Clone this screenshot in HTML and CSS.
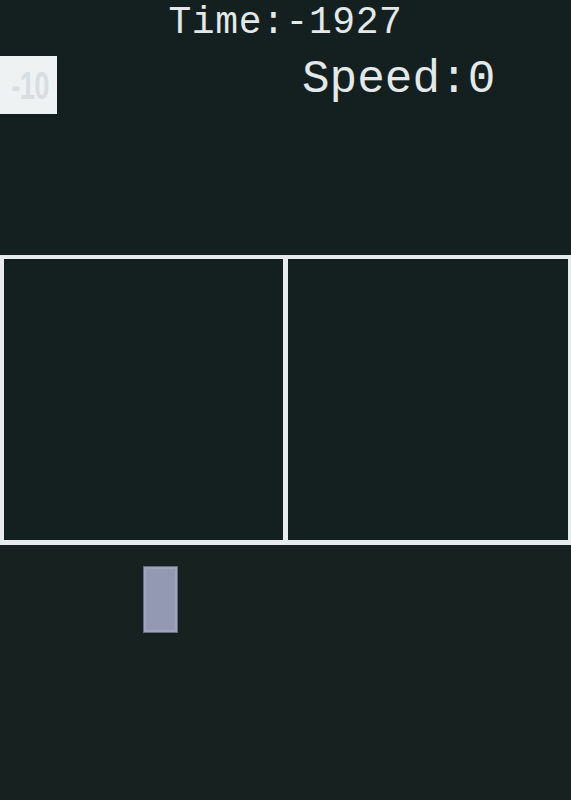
FILE: index.html
```html
<!DOCTYPE html>
<html>
<head>
<meta charset="utf-8">
<link rel="stylesheet" href="styles.css">
</head>
<body>
<div class="screen">
  <header class="hud">
    <div class="time">Time:-1927</div>
    <div class="hud-row">
      <div class="score"><span class="score-text">-10</span></div>
      <div class="speed">Speed:0</div>
    </div>
  </header>
  <section class="board">
    <div class="cell cell-left"></div>
    <div class="cell cell-right"></div>
  </section>
  <section class="field">
    <div class="piece"></div>
  </section>
</div>
</body>
</html>
```
FILE: styles.css
```css
html, body {
  margin: 0;
  padding: 0;
  background: #152020;
}
.screen {
  width: 571px;
  height: 800px;
  overflow: hidden;
  background: #152020;
  display: flex;
  flex-direction: column;
}
.hud {
  height: 255px;
  background: #141f20;
  color: #e3e8e8;
  font-family: "Courier New", "Liberation Mono", monospace;
}
.time {
  font-size: 38px;
  line-height: 44px;
  padding-top: 1px;
  text-align: center;
  letter-spacing: 0.6px;
}
.hud-row {
  display: flex;
  align-items: flex-start;
}
.score {
  margin-top: 11px;
  width: 57px;
  height: 58px;
  background: #eef2f3;
  color: #d8dde2;
  font-family: "Liberation Sans", sans-serif;
  font-weight: bold;
  font-size: 38px;
  line-height: 60px;
  text-align: center;
  box-sizing: border-box;
  padding-left: 2px;
  overflow: hidden;
}
.score-text {
  display: inline-block;
  transform: scaleX(0.72);
  letter-spacing: -1px;
}
.speed {
  margin-top: 9px;
  margin-left: 245px;
  font-size: 46px;
  line-height: 52px;
}
.board {
  display: grid;
  grid-template-columns: 279px 280px;
  gap: 5px;
  padding: 4px 3px 5px 4px;
  height: 290px;
  box-sizing: border-box;
  background: #e6ecee;
}
.cell-left {
  background: #142020;
}
.cell-right {
  background: #13201f;
}
.field {
  flex: 1;
  background: #162120;
  padding-top: 21px;
  padding-left: 143px;
}
.piece {
  width: 35px;
  height: 67px;
  box-sizing: border-box;
  background: #9398b3;
  border: 1px solid #666c82;
  box-shadow: inset 0 0 0 2px #a0a5bd;
}
```
